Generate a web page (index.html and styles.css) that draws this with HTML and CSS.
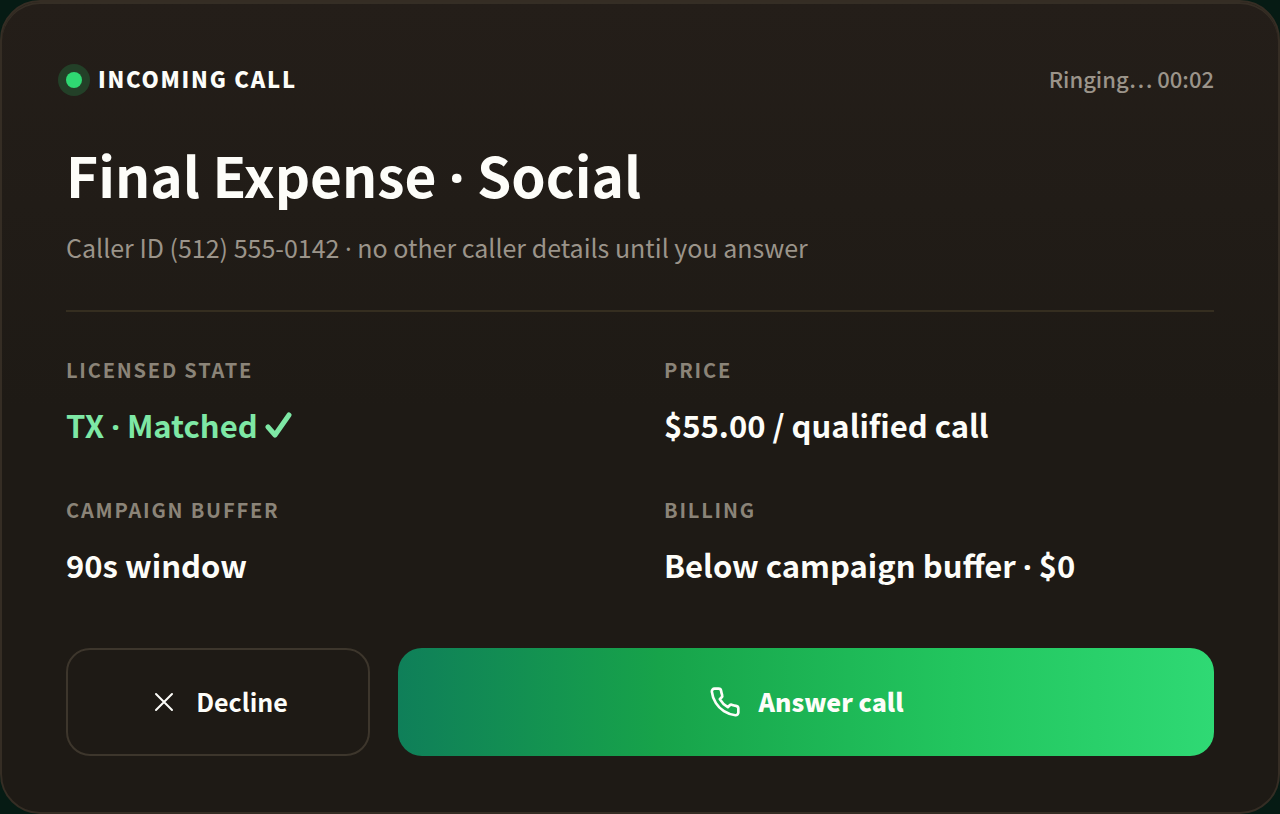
FILE: index.html
```html
<!DOCTYPE html>
<html lang="en">
<head>
<meta charset="utf-8">
<meta name="viewport" content="width=device-width, initial-scale=1">
<title>Incoming call</title>
<link rel="stylesheet" href="styles.css">
</head>
<body>
<main class="card">
  <header class="status">
    <div class="status-label"><span class="dot"></span>INCOMING CALL</div>
    <div class="timer">Ringing… 00:02</div>
  </header>
  <h1 class="title">Final Expense <span class="sep">·</span> Social</h1>
  <p class="caller">Caller ID (512) 555-0142 <span class="sep">·</span> no other caller details until you answer</p>
  <dl class="details">
    <div class="detail">
      <dt>LICENSED STATE</dt>
      <dd class="matched">TX <span class="sep">·</span> Matched <svg class="check" viewBox="0 0 28 26" aria-hidden="true"><path d="M3 15l7 8L24 3"/></svg></dd>
    </div>
    <div class="detail">
      <dt>PRICE</dt>
      <dd>$55.00 / qualified call</dd>
    </div>
    <div class="detail">
      <dt>CAMPAIGN BUFFER</dt>
      <dd>90s window</dd>
    </div>
    <div class="detail">
      <dt>BILLING</dt>
      <dd>Below campaign buffer <span class="sep">·</span> $0</dd>
    </div>
  </dl>
  <div class="actions">
    <button class="button decline" type="button">
      <svg class="icon" viewBox="0 0 32 32" aria-hidden="true"><path d="M8 8l16 16M24 8L8 24"/></svg>
      <span class="button-text">Decline</span>
    </button>
    <button class="button answer" type="button">
      <svg class="icon phone" viewBox="0 0 24 24" aria-hidden="true"><path d="M22 16.92v3a2 2 0 0 1-2.18 2 19.79 19.79 0 0 1-8.63-3.07 19.5 19.5 0 0 1-6-6 19.79 19.79 0 0 1-3.07-8.67A2 2 0 0 1 4.11 2h3a2 2 0 0 1 2 1.72 12.84 12.84 0 0 0 .7 2.81 2 2 0 0 1-.45 2.11L8.09 9.91a16 16 0 0 0 6 6l1.27-1.27a2 2 0 0 1 2.11-.45 12.84 12.84 0 0 0 2.81.7A2 2 0 0 1 22 16.92z"/></svg>
      <span class="button-text">Answer call</span>
    </button>
  </div>
</main>
</body>
</html>
```
FILE: styles.css
```css
* {
  box-sizing: border-box;
}

body {
  margin: 0;
  min-height: 100vh;
  display: flex;
  background: #061b14;
  color: #fdfdf9;
  font-family: "Noto Sans CJK SC", "Noto Sans", sans-serif;
}

.card {
  flex: 1;
  padding: 58px 64px 56px;
  border: 2px solid #352d24;
  border-radius: 40px;
  background: linear-gradient(#241e19, #1e1a15 50%);
  box-shadow: inset 0 2px 0 #352e25;
}

.sep {
  font-family: "Noto Sans", sans-serif;
  line-height: 1;
}

.status {
  display: flex;
  justify-content: space-between;
  align-items: center;
  line-height: 36px;
}

.status-label {
  display: flex;
  align-items: center;
  gap: 16px;
  font-size: 22px;
  font-weight: 900;
  letter-spacing: 0.08em;
}

.dot {
  width: 16px;
  height: 16px;
  margin-top: 4px;
  border-radius: 50%;
  background: #2fd872;
  box-shadow: 0 0 0 8px #234028;
}

.timer {
  color: #9b948a;
  font-size: 22px;
  font-weight: 500;
}

.title {
  margin: 42px 0 0;
  font-size: 55px;
  font-weight: 700;
  line-height: 72px;
}

.caller {
  margin: 17px 0 0;
  color: #9b948a;
  font-size: 25px;
  line-height: 40px;
}

.details {
  display: grid;
  grid-template-columns: 1fr 1fr;
  gap: 46px 48px;
  margin: 43px 0 0;
  padding-top: 42px;
  border-top: 2px solid #352e20;
}

.detail dt {
  color: #8b8478;
  font-size: 20px;
  font-weight: 700;
  letter-spacing: 0.09em;
  line-height: 32px;
}

.detail dd {
  margin: 16px 0 0;
  font-size: 31px;
  font-weight: 700;
  line-height: 46px;
}

.detail .matched {
  color: #7ee8a5;
}

.check {
  width: 28px;
  height: 26px;
  fill: none;
  stroke: currentColor;
  stroke-width: 5;
  stroke-linecap: round;
  stroke-linejoin: round;
}

.actions {
  display: flex;
  gap: 28px;
  margin-top: 60px;
}

.button {
  display: flex;
  align-items: center;
  justify-content: center;
  gap: 16px;
  height: 108px;
  border: 0;
  border-radius: 24px;
  color: inherit;
  font: inherit;
  font-size: 25px;
  font-weight: 700;
}

.button-text {
  padding-bottom: 2px;
}

.decline {
  flex: 0 0 304px;
  border: 2px solid #3d362c;
  background: transparent;
}

.answer {
  flex: 1;
  gap: 18px;
  background: linear-gradient(90deg, #0f7f59, #17a34a 32%, #22c55e 68%, #2fd974);
  font-weight: 900;
}

.icon {
  width: 32px;
  height: 32px;
  fill: none;
  stroke: currentColor;
  stroke-width: 2;
  stroke-linecap: round;
  stroke-linejoin: round;
}
```
